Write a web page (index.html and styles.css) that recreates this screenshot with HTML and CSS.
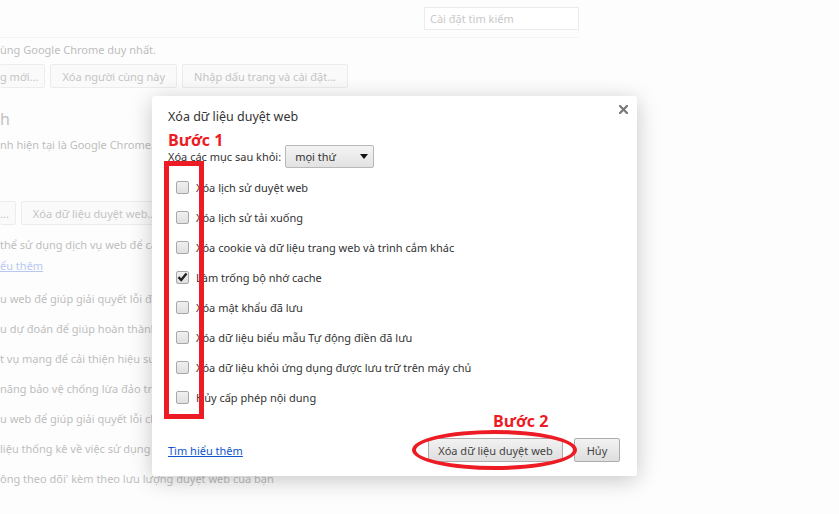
FILE: index.html
```html
<!DOCTYPE html>
<html lang="vi">
<head>
    <meta charset="UTF-8">
    <meta name="viewport" content="width=device-width, initial-scale=1.0">
    <title>Cài đặt</title>
    <link rel="stylesheet" href="styles.css">
</head>
<body>
    <div class="page">
        <div class="topbar">
            <input class="search" type="text" placeholder="Cài đặt tìm kiếm">
        </div>
        <p class="line first">ùng Google Chrome duy nhất.</p>
        <div class="btn-row">
            <button class="bg-btn cut">g mới...</button>
            <button class="bg-btn">Xóa người cùng này</button>
            <button class="bg-btn">Nhập dấu trang và cài đặt...</button>
        </div>
        <h3 class="section">h</h3>
        <p class="line">nh hiện tại là Google Chrome.</p>
        <div class="btn-row second">
            <button class="bg-btn cut">...</button>
            <button class="bg-btn">Xóa dữ liệu duyệt web...</button>
        </div>
        <p class="line tight">thể sử dụng dịch vụ web để cải thiện lỗi điều hướng</p>
        <p class="line tight"><a href="#" class="bg-link">ểu thêm</a></p>
        <p class="line spaced">u web để giúp giải quyết lỗi điều hướng</p>
        <p class="line">u dự đoán để giúp hoàn thành tìm kiếm</p>
        <p class="line">t vụ mạng để cải thiện hiệu suất tải trang</p>
        <p class="line">năng bảo vệ chống lừa đảo trực tuyến</p>
        <p class="line">u web để giúp giải quyết lỗi chính tả</p>
        <p class="line">liệu thống kê về việc sử dụng</p>
        <p class="line">ông theo dõi' kèm theo lưu lượng duyệt web của bạn</p>
    </div>

    <div class="dialog">
        <button class="close" title="Đóng">
            <svg width="9" height="9" viewBox="0 0 9 9"><path d="M1 1 L8 8 M8 1 L1 8" stroke="#777" stroke-width="2.2" stroke-linecap="square"/></svg>
        </button>
        <h1 class="dialog-title">Xóa dữ liệu duyệt web</h1>
        <div class="step">Bước 1</div>
        <div class="period">
            <span>Xóa các mục sau khỏi:</span>
            <div class="select">
                <span>mọi thứ</span>
                <svg width="8" height="5" viewBox="0 0 8 5"><path d="M0 0 H8 L4 5 Z" fill="#111"/></svg>
            </div>
        </div>
        <ul class="options">
            <li><span class="check"></span>Xóa lịch sử duyệt web</li>
            <li><span class="check"></span>Xóa lịch sử tải xuống</li>
            <li><span class="check"></span>Xóa cookie và dữ liệu trang web và trình cắm khác</li>
            <li><span class="check on"><svg width="11" height="10" viewBox="0 0 11 10"><path d="M1.5 5.2 L4.2 8 L9.5 1.5" fill="none" stroke="#222" stroke-width="2.4"/></svg></span>Làm trống bộ nhớ cache</li>
            <li><span class="check"></span>Xóa mật khẩu đã lưu</li>
            <li><span class="check"></span>Xóa dữ liệu biểu mẫu Tự động điền đã lưu</li>
            <li><span class="check"></span>Xóa dữ liệu khỏi ứng dụng được lưu trữ trên máy chủ</li>
            <li><span class="check"></span>Hủy cấp phép nội dung</li>
        </ul>
        <div class="footer">
            <a href="#" class="learn">Tìm hiểu thêm</a>
            <div class="actions">
                <button class="btn">Xóa dữ liệu duyệt web</button>
                <button class="btn">Hủy</button>
            </div>
        </div>

        <!-- red hand-drawn annotations -->
        <div class="mark-box"></div>
        <div class="step step2">Bước 2</div>
        <div class="mark-ring"></div>
    </div>
</body>
</html>
```

FILE: styles.css
```css
body {
    margin: 0;
    width: 839px;
    height: 514px;
    overflow: hidden;
    position: relative;
    background: #fdfdfd;
    font-family: "Noto Sans", "Open Sans", sans-serif;
    font-size: 11px;
}

.page {
    color: #bdbdbd;
}

.topbar {
    height: 38px;
    width: 578px;
    border-bottom: 1px solid #f3f3f3;
    box-sizing: border-box;
    padding: 7px 0 0 424px;
}

.search {
    width: 155px;
    height: 23px;
    box-sizing: border-box;
    border: 1px solid #ebebeb;
    font-family: inherit;
    font-size: 11px;
    padding: 0 5px;
    background: #fff;
}

.search::placeholder {
    color: #c8c8c8;
}

.line {
    margin: 0;
    height: 30px;
    line-height: 22px;
    white-space: nowrap;
}

.line.first {
    margin-top: 1px;
    height: 25px;
}

.line.tight {
    height: 21px;
}

.line.spaced {
    margin-top: 12px;
}

.bg-link {
    color: #b8c8f0;
}

.btn-row {
    display: flex;
    gap: 5px;
    height: 24px;
    margin-bottom: 20px;
}

.btn-row.second {
    margin: 0 0 9px;
}

.bg-btn {
    font-family: inherit;
    font-size: 11px;
    color: #c4c4c4;
    background: #fafafa;
    border: 1px solid #ececec;
    border-radius: 2px;
    padding: 0 11px;
    white-space: nowrap;
}

.bg-btn.cut {
    border-left: 0;
    padding-left: 0;
    padding-right: 6px;
}

.section {
    margin: 0;
    height: 26px;
    line-height: 22px;
    font-size: 16px;
    font-weight: normal;
    color: #c0c0c0;
}

.section + .line {
    height: 67px;
}

.dialog {
    position: absolute;
    left: 152px;
    top: 96px;
    width: 485px;
    height: 380px;
    box-sizing: border-box;
    padding: 12px 16px 0;
    background: #fff;
    border-radius: 3px;
    box-shadow: 0 4px 22px rgba(0, 0, 0, 0.22);
    color: #333;
}

.close {
    position: absolute;
    right: 9px;
    top: 9px;
    border: 0;
    background: none;
    padding: 0;
    width: 9px;
    height: 9px;
    display: flex;
}

.dialog-title {
    margin: 0;
    font-size: 12.5px;
    font-weight: normal;
    line-height: 18px;
    color: #333;
}

.step {
    color: #ed1c24;
    font-weight: bold;
    font-size: 16px;
    line-height: 18px;
    margin-top: 5px;
    font-family: "Open Sans", sans-serif;
}

.period {
    display: flex;
    align-items: center;
    gap: 4px;
    height: 24px;
    margin-top: -5px;
}

.select {
    width: 89px;
    height: 23px;
    box-sizing: border-box;
    border: 1px solid #b9b9b9;
    border-radius: 2px;
    background: linear-gradient(#f4f4f4, #e2e2e2);
    display: flex;
    align-items: center;
    justify-content: space-between;
    padding: 0 5px 0 9px;
    color: #333;
}

.options {
    list-style: none;
    margin: 4px 0 0;
    padding: 0;
}

.options li {
    height: 30px;
    display: flex;
    align-items: center;
    padding-left: 8px;
    white-space: nowrap;
}

.check {
    width: 13px;
    height: 13px;
    box-sizing: border-box;
    border: 1px solid #a8a8a8;
    border-radius: 2px;
    background: linear-gradient(#f0f0f0, #e0e0e0);
    margin-right: 7px;
    display: flex;
    align-items: center;
    justify-content: center;
}

.footer {
    display: flex;
    justify-content: space-between;
    align-items: center;
    margin-top: 26px;
    padding-right: 1px;
}

.learn {
    color: #1155cc;
}

.actions {
    display: flex;
    gap: 11px;
}

.btn {
    height: 24px;
    font-family: inherit;
    font-size: 11px;
    color: #444;
    border: 1px solid #acacac;
    border-radius: 2px;
    background: linear-gradient(#f2f2f2, #dedede);
    padding: 0 4px;
    white-space: nowrap;
}

.actions .btn:first-child {
    width: 135px;
}

.actions .btn:last-child {
    width: 46px;
}

.mark-box {
    position: absolute;
    left: 12px;
    top: 65px;
    width: 40px;
    height: 258px;
    box-sizing: border-box;
    border: 5px solid #ed1c24;
}

.step2 {
    position: absolute;
    left: 341px;
    top: 316px;
    margin: 0;
}

.mark-ring {
    position: absolute;
    left: 260px;
    top: 334px;
    width: 165px;
    height: 40px;
    box-sizing: border-box;
    border: 4px solid #ed1c24;
    border-radius: 50%;
}
```
